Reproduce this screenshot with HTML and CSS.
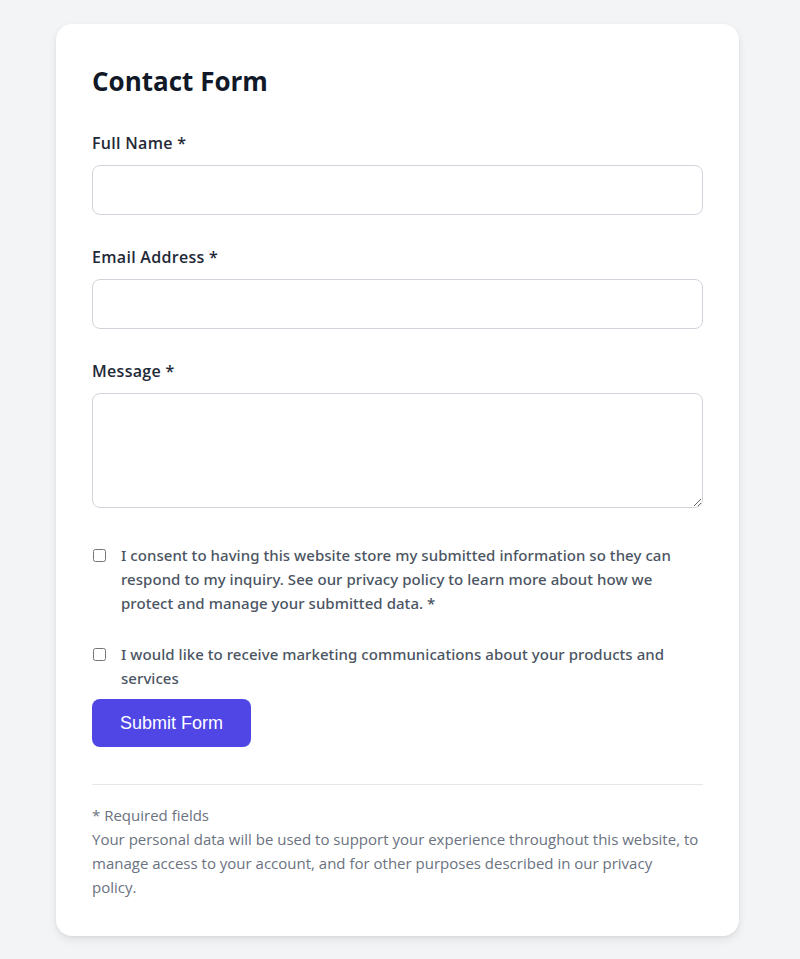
FILE: index.html
```html
<!DOCTYPE html>
<html lang="en">
<head>
<meta charset="utf-8">
<title>Contact Form</title>
<link rel="stylesheet" href="styles.css">
</head>
<body>
<main class="card">
  <h1 class="title">Contact Form</h1>
  <form class="form">
    <div class="field">
      <label class="label" for="name">Full Name *</label>
      <input class="input" id="name" type="text">
    </div>
    <div class="field">
      <label class="label" for="email">Email Address *</label>
      <input class="input" id="email" type="email">
    </div>
    <div class="field field-msg">
      <label class="label" for="msg">Message *</label>
      <textarea class="input textarea" id="msg"></textarea>
    </div>
    <label class="check check-first">
      <input type="checkbox" class="box">
      <span>I consent to having this website store my submitted information so they can respond to my inquiry. See our privacy policy to learn more about how we protect and manage your submitted data. *</span>
    </label>
    <label class="check check-second">
      <input type="checkbox" class="box">
      <span>I would like to receive marketing communications about your products and services</span>
    </label>
    <button type="button" class="submit">Submit Form</button>
  </form>
  <div class="footer">
    <p>* Required fields</p>
    <p class="note">Your personal data will be used to support your experience throughout this website, to manage access to your account, and for other purposes described in our privacy policy.</p>
  </div>
</main>
</body>
</html>
```
FILE: styles.css
```css
html, body {
  margin: 0;
  padding: 0;
  background: #f3f4f6;
}
body {
  font-family: "Open Sans", "Noto Sans", sans-serif;
  font-size: 15px;
  line-height: 24px;
  color: #1f2937;
  padding: 24px 0 24px 56px;
}
.card {
  width: 611px;
  padding: 36px 36px 37px 36px;
  background: #ffffff;
  border-radius: 16px;
  box-shadow: 0 4px 8px rgba(0,0,0,0.08), 0 1px 3px rgba(0,0,0,0.05);
}
.title {
  margin: 0 0 29px 0;
  font-size: 26px;
  line-height: 42px;
  font-weight: 700;
  color: #111827;
}
.form {
  display: flex;
  flex-direction: column;
}
.field {
  display: flex;
  flex-direction: column;
  margin-bottom: 30px;
}
.field-msg {
  margin-bottom: 35px;
}
.label {
  font-size: 16px;
  font-weight: 600;
  letter-spacing: 0.3px;
  margin-bottom: 10px;
  color: #1f2937;
}
.input {
  box-sizing: border-box;
  height: 50px;
  border: 1px solid #d1d5db;
  border-radius: 8px;
  padding: 12px 16px;
  font: inherit;
  outline: none;
}
.textarea {
  height: 115px;
  resize: vertical;
}
.check {
  display: flex;
  align-items: flex-start;
  gap: 15px;
  color: #4b5563;
  font-family: "Noto Sans", "Open Sans", sans-serif;
  font-weight: 500;
  letter-spacing: 0.05px;
}
.check-first {
  margin-bottom: 27px;
}
.check-second {
  margin-bottom: 9px;
}
.box {
  margin: 6px 0 0 1px;
  width: 13px;
  height: 13px;
  flex: none;
}
.submit {
  align-self: flex-start;
  background: #4f46e5;
  color: #ffffff;
  border: none;
  border-radius: 8px;
  padding: 12px 28px;
  font-family: "Liberation Sans", Arial, sans-serif;
  font-size: 18px;
  line-height: 24px;
}
.footer {
  margin-top: 37px;
  border-top: 1px solid #e5e7eb;
  padding-top: 18px;
  color: #6b7280;
}
.footer p {
  margin: 0;
}
.note {
  max-width: 607px;
}
```
